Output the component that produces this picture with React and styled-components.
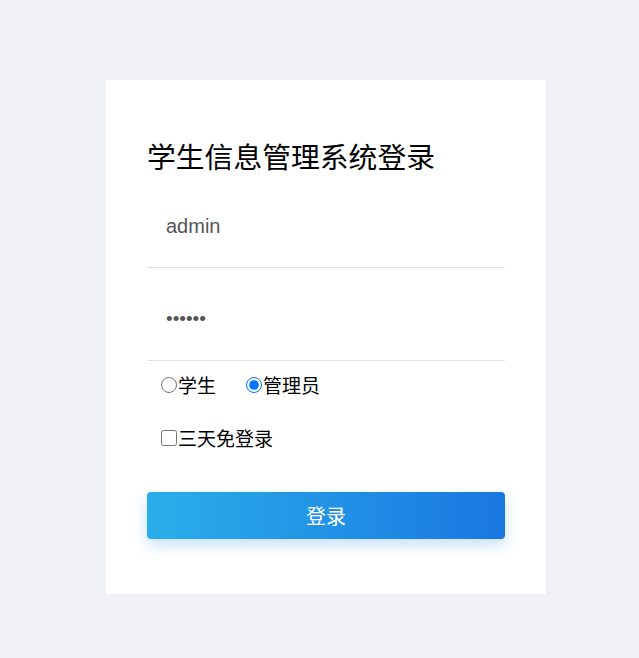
import React from "react";
import styled, { createGlobalStyle } from "styled-components";

const Global = createGlobalStyle`
  html, body { margin: 0; padding: 0; background: #f0f2f5; }
  body { font-family: "Noto Sans CJK SC", "Liberation Sans", sans-serif; }
  * { box-sizing: border-box; }
`;

const Page = styled.div`
  min-height: 658px;
  padding: 80px 0 0 106px;
`;

const Card = styled.form`
  width: 440px;
  background: #ffffff;
  padding: 56px 41px 55px 41px;
  display: flex;
  flex-direction: column;
`;

const Title = styled.h1`
  margin: 0;
  font-size: 28.8px;
  font-weight: 400;
  line-height: 39px;
  height: 39px;
  color: #000;
  white-space: nowrap;
`;

const Field = styled.input`
  display: block;
  width: 100%;
  height: 83px;
  margin: 10px 0 0;
  padding: 0 19px;
  border: none;
  border-bottom: 1px solid #e2e2e2;
  outline: none;
  background: transparent;
  font-family: "Liberation Sans", Arial, sans-serif;
  font-size: ${(p) => (p.type === "password" ? "19px" : "20px")};
  color: #555;
`;

const Row = styled.div`
  display: flex;
  align-items: center;
  height: 26px;
  margin-top: ${(p) => p.$mt}px;
  padding-left: 14px;
  gap: 30px;
  font-size: 19px;
  color: #000;
`;

const Choice = styled.label`
  display: inline-flex;
  align-items: center;
  line-height: 26px;
  white-space: nowrap;
  cursor: pointer;
`;

const Radio = styled.input.attrs({ type: "radio" })`
  width: 16px;
  height: 16px;
  margin: 0 1px 0 0;
  accent-color: #0075ff;
`;

const Check = styled.input.attrs({ type: "checkbox" })`
  width: 16px;
  height: 16px;
  margin: 0 1px 0 0;
`;

const Submit = styled.button`
  margin-top: 41px;
  height: 47px;
  width: 100%;
  border: none;
  border-radius: 4px;
  background: linear-gradient(90deg, #2aaeea 0%, #1977e1 100%);
  box-shadow: 0 6px 14px rgba(30, 130, 230, 0.25);
  color: #fff;
  font-family: "Noto Sans CJK SC", sans-serif;
  font-size: 20px;
  cursor: pointer;
`;

export default function App() {
  return (
    <>
      <Global />
      <Page>
        <Card onSubmit={(e) => e.preventDefault()}>
          <Title>学生信息管理系统登录</Title>
          <Field type="text" defaultValue="admin" />
          <Field type="password" defaultValue="123456" />
          <Row $mt={11}>
            <Choice>
              <Radio name="role" value="student" />
              学生
            </Choice>
            <Choice>
              <Radio name="role" value="admin" defaultChecked />
              管理员
            </Choice>
          </Row>
          <Row $mt={27}>
            <Choice>
              <Check />
              三天免登录
            </Choice>
          </Row>
          <Submit type="submit">登录</Submit>
        </Card>
      </Page>
    </>
  );
}
